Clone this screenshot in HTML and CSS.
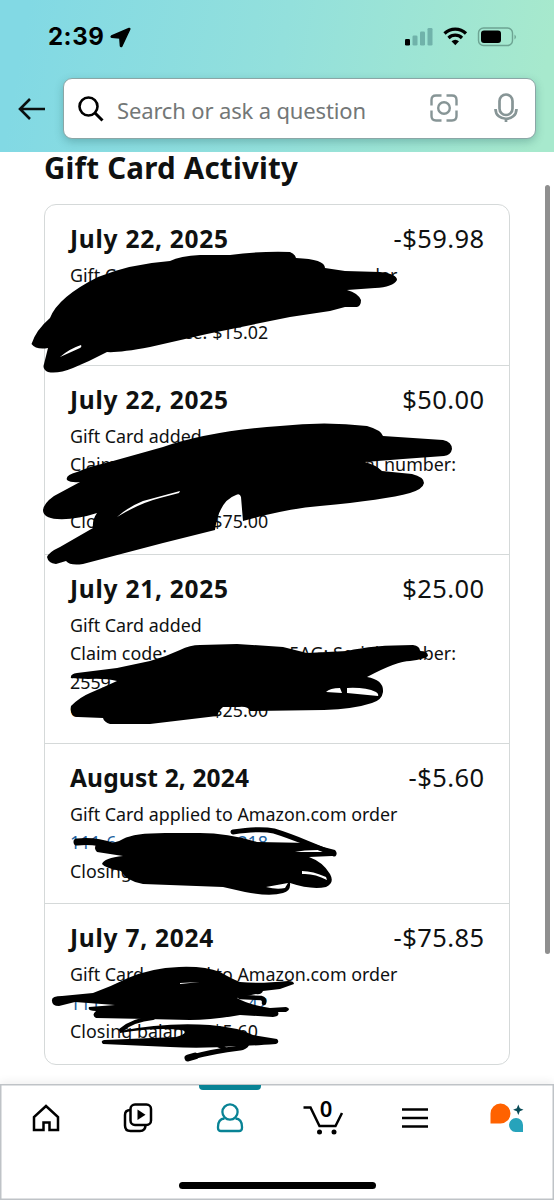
FILE: index.html
```html
<!DOCTYPE html>
<html lang="en">
<head>
<meta charset="utf-8">
<title>Gift Card Activity</title>
<link rel="stylesheet" href="styles.css">
</head>
<body>
<div class="screen">
  <header class="header">
    <div class="status">
      <span class="time">2:39</span>
      <svg class="location" width="21" height="21" viewBox="0 0 21 21" stroke="#000" stroke-width="1.400" stroke-linejoin="round"><path d="M19 1.500 1.500 9q-1 .8.3 1.300l8 .7.6 8q.6 1.200 1.400.2L19.800 2.200q.2-.9-.8-.7z"/></svg>
      <svg class="signals" width="114" height="22" viewBox="0 0 114 22">
        <rect x="1" y="13" width="5" height="6.500" rx="1.300"/>
        <g fill="#70b2aa"><rect x="8.500" y="9.500" width="5" height="10" rx="1.300"/><rect x="16" y="5.500" width="5" height="14" rx="1.300"/><rect x="23.500" y="2" width="5" height="17.500" rx="1.300"/></g>
        <g fill="none" stroke="#000" stroke-width="3.200"><path d="M40.500 7.500a15.500 15.500 0 0 1 21.500 0M44.500 12a9.500 9.500 0 0 1 13.500 0"/></g><path d="M47.500 15.300q3.700-3 7.500 0L51.300 19.200z"/>
        <rect x="74.500" y="2" width="34" height="17.500" rx="5" fill="none" stroke="#6da493" stroke-width="1.400"/><rect x="77" y="4.500" width="20" height="12.500" rx="3"/><path d="M110.500 8.500v5q3-2.500 0-5z" fill="#6da493"/>
      </svg>
    </div>
    <div class="search-row">
      <svg class="back" width="30" height="26" viewBox="0 0 30 26" fill="none" stroke="#0a1010" stroke-width="2.600"><path d="M28 13H3M13 3 3 13l10 10"/></svg>
      <div class="search">
        <svg class="glass" width="26" height="26" viewBox="0 0 26 26" fill="none" stroke="#000" stroke-width="2.600"><circle cx="10.500" cy="10.500" r="9"/><path d="m17 17 7.500 7.500" stroke-width="3"/></svg>
        <span class="placeholder">Search or ask a question</span>
        <svg class="lens" width="28" height="28" viewBox="0 0 28 28" fill="none" stroke="#879596" stroke-width="2.400"><path d="M1.500 11.500V6q0-4.500 4.500-4.500h5.500M16.500 1.500H22q4.500 0 4.500 4.500v5.500M26.500 16.500V22q0 4.500-4.500 4.500h-5.500M11.500 26.500H6q-4.500 0-4.500-4.500v-5.500"/><circle cx="14" cy="14" r="5.800"/></svg>
        <svg class="mic" width="24" height="30" viewBox="0 0 24 30" fill="none" stroke="#879596" stroke-width="2.700"><rect x="5.500" y="1.500" width="13" height="20.500" rx="6.500"/><path d="M1.500 16c0 13 21 13 21 0M12 25.500V29"/></svg>
      </div>
    </div>
  </header>

  <main class="content">
    <h1 class="title">Gift Card Activity</h1>
    <section class="card">
      <article class="entry">
        <div class="entry-head"><h2>July 22, 2025</h2><span class="amount">-$59.98</span></div>
        <p>Gift Card applied to Amazon.com order</p><p>&nbsp;</p><p class="balance">Closing balance: $15.02</p>
      </article>
      <article class="entry tall">
        <div class="entry-head"><h2>July 22, 2025</h2><span class="amount">$50.00</span></div>
        <p>Gift Card added</p><p class="split code-line"><span>Claim code:</span><span>Serial number:</span></p><p>&nbsp;</p><p class="balance">Closing balance: $75.00</p>
      </article>
      <article class="entry tall">
        <div class="entry-head"><h2>July 21, 2025</h2><span class="amount">$25.00</span></div>
        <p>Gift Card added</p><p class="split code-line"><span>Claim code:</span><span>5AG; Serial number:</span></p><p>2559</p><p class="balance">Closing balance: $25.00</p>
      </article>
      <article class="entry">
        <div class="entry-head"><h2 class="tight">August 2, 2024</h2><span class="amount">-$5.60</span></div>
        <p>Gift Card applied to Amazon.com order</p><p class="split order"><span>111-6</span><span>218</span></p><p>Closing</p>
      </article>
      <article class="entry">
        <div class="entry-head"><h2>July 7, 2024</h2><span class="amount">-$75.85</span></div>
        <p>Gift Card applied to Amazon.com order</p><p class="split order"><span>111</span><span>42</span></p><p class="balance">Closing balance: $5.60</p>
      </article>
    </section>
  </main>
  <div class="scrollbar"></div>

  <svg class="ink" width="554" height="1200" viewBox="0 0 554 1200">
    <g fill-rule="evenodd">
      <path d="M31.500 344Q36 330 50 318Q58 297 98 277Q130 264 170 261Q180 256 200 255L230 255Q260 251 290 252Q295 254 296 258Q325 259 325 268L345 271L380 272Q397 274 397 280Q393 287 375 288L347 290Q358 293 361 300Q361 306 357 307L345 307L330 311L290 317L207 334L150 347Q118 353 107 352Q90 361 73 368Q58 374 48 372Q42 369 44 364L48 348Q36 350 31.500 344Z M60 357Q69 349 81 345Q82 347 80 348Z"/>
      <path d="M67 480Q65 475 77 472L90 467L113 461L163 447Q210 431 280 426Q325 421 367 426Q381 430 383 436L443 440Q452 442 452 449Q451 455 444 456L403 459L365 462Q376 465 382 471L412 474Q424 477 424 483Q423 489 410 493Q385 500 320 506Q285 509 243 521L241 497Q240 493 236 495Q219 501 215 530L163 543L83 564Q70 566 66 561L56 564Q48 563 47 557Q49 552 60 547L93 528Q92 520 97 513Q76 520 57 519Q43 518 43 510Q44 503 54 496L80 482Q71 483 67 480Z M117 517Q128 507 143 501L180 491L179 493L160 498Q140 503 117 517Z"/>
      <path d="M71 678Q70 674 77 673L117 668L150 661Q165 657 180 650Q190 645 200 645L237 644L283 647L307 653L347 651Q373 645 413 645Q420 646 420 651Q428 651 428 656Q425 659 410 661Q397 661 367 677Q384 680 383 692Q382 700 372 703Q354 709 324 710L250 711Q248 706 239 707L223 707Q219 710 217 716L150 724L110 724Q104 722 103 718L78 717Q69 716 71 706Q80 697 90 693Q104 687 117 681Q105 678 88 679Z M326 692Q330 688 340 688L342 693Z M347 688Q365 687 376 692Q379 694 378 696L347 693Z"/>
      <path d="M97 844Q116 844 123 839Q134 833 165 833L200 833Q228 833 257 842L311 843Q322 847 335 850Q339 854 332 856L309 857Q323 862 330 874Q335 883 326 887Q311 890 290 883Q291 891 283 893Q270 897 245 892L223 887L143 884Q126 881 121 871Q105 868 102 864Q104 858 123 856L97 852Q93 848 97 844Z M266 887L288 883L285 888Q277 890 266 887Z M302 871Q313 871 326 877L327 880Q314 873 302 874Z M295 852Q303 850 318 850L327 852Z"/>
      <path d="M52 1001Q51 996 62 996L93 993Q112 986 128 978Q151 968 179 967Q205 966 220 972Q232 979 240 982Q259 984 288 981Q294 981 294 984L280 989L263 991Q261 995 256 994L237 998Q249 1005 270 1008L286 1007Q292 1009 286 1012L278 1012Q280 1016 273 1017L240 1015Q211 1020 190 1020L147 1019L96 1018Q91 1015 96 1011Q87 1011 89 1007L115 1005L75 1002L59 1006Q52 1006 52 1001Z M180 983L200 982L180 984Z"/>
      <path d="M120 1031Q165 1022 210 1025Q237 1027 253 1035L277 1039Q280 1042 276 1044Q248 1046 238 1046Q202 1049 170 1047L103 1044Q100 1041 104 1040L176 1037Q190 1033 182 1030Q155 1027 120 1033Z"/>
    </g>
    <g fill="none" stroke="#000" stroke-linecap="round" stroke-linejoin="round">
      <path d="M77 842Q95 840 112 846" stroke-width="7"/><path d="M233 832Q260 828 274 831Q287 835 307 843L334 854" stroke-width="5"/>
      <path d="M240 997L261 998Q265 999 264 1003" stroke-width="4.500"/><path d="M121 1030Q133 1020 153 1018" stroke-width="4"/>
      <path d="M246 1041Q249 1046 240 1048Q214 1051 188 1058" stroke-width="5"/><path d="M206 1042Q219 1044 226 1050" stroke-width="4"/>
      <path d="M188 1058L195 1056" stroke-width="7"/>
    </g>
  </svg>

  <nav class="tabs">
    <a class="tab"><svg width="34" height="34" viewBox="0 0 34 34" fill="none" stroke="#000" stroke-width="2.500"><path d="M5 29V16L17 5 29 16v13h-8.500v-7.500h-6V29z"/></svg></a>
    <a class="tab"><svg width="34" height="34" viewBox="0 0 34 34" fill="none" stroke="#000" stroke-width="2.500"><rect x="9.500" y="3.500" width="20.500" height="20.500" rx="4.500"/><path d="M9.500 9q-5.500 0-5.500 5v10.500q0 5.500 5.500 5.500h9.500q5.500 0 5.500-6"/><path d="m16.500 8.500 8 5.200-8 5.300z" fill="#000" stroke="none"/></svg></a>
    <a class="tab active"><svg width="34" height="34" viewBox="0 0 34 34" fill="none" stroke="#088395" stroke-width="2.300"><circle cx="17" cy="11" r="7.600"/><path d="M11.500 17.500Q5 18 5 26v1q0 3 3 3h18q3 0 3-3v-1q0-8-6.500-8.500"/></svg></a>
    <a class="tab"><svg width="42" height="36" viewBox="0 0 42 36" fill="none" stroke="#000" stroke-width="2.500"><path d="M1.500 7.500h7L17.500 26h16L40 13"/><g fill="#000" stroke="none"><circle cx="17.500" cy="32" r="2.500"/><circle cx="32" cy="32" r="2.500"/></g></svg><span class="count">0</span></a>
    <a class="tab"><svg width="34" height="34" viewBox="0 0 34 34" stroke="#000" stroke-width="2.500"><path d="M4 8.500h26M4 17h26M4 25.500h26"/></svg></a>
    <a class="tab"><svg width="34" height="34" viewBox="0 0 34 34"><path d="M.500 22.500v-10a10 10 0 1 1 10 10z" fill="#ff6200"/><path d="M33 31h-7.500a7 7 0 1 1 7.500-7z" fill="#27a3bb"/><path d="m28.300 3.500 1.500 3.700 3.700 1.500-3.700 1.500-1.500 3.700-1.500-3.700-3.700-1.500 3.700-1.500z" fill="#084b57"/></svg></a>
    <div class="home-bar"></div>
  </nav>
</div>
</body>
</html>
```
FILE: styles.css
```css
* { box-sizing: border-box; }
body { margin: 0; font-family: "Noto Sans", "Open Sans", sans-serif; color: #0f1111; background: #fff; }
.screen { position: relative; width: 554px; height: 1200px; overflow: hidden; display: flex; flex-direction: column; }
.header { height: 152px; flex: none; background: linear-gradient(100deg, #82d9e4 5%, #93e0dc 50%, #a7e9cd 96%); }
.status { height: 78px; padding: 0 36px 4px 48px; display: flex; align-items: center; }
.time { font: 700 24px/30px Inter, sans-serif; color: #000; width: 57px; letter-spacing: .5px; }
.location { margin-left: 5px; }
.signals { margin-left: auto; }
.search-row { display: flex; align-items: center; padding-left: 17px; }
.search { margin-left: 16px; width: 473px; height: 61px; background: #fff; border: 1px solid #8ba6a6; border-radius: 9px; display: flex; align-items: center; padding: 0 17px 0 14px; box-shadow: 0 3px 8px rgba(30, 90, 90, .3); }
.glass { flex: none; }
.placeholder { margin: 3px auto 0 13px; color: #737777; font-size: 22px; white-space: nowrap; letter-spacing: -.15px; }
.mic { margin-left: 36px; margin-bottom: 2px; flex: none; }
.lens { flex: none; margin-bottom: 2px; }
.content { padding: 0 44px; }
.title { margin: -4px 0 0; height: 56px; font-size: 29.500px; line-height: 40px; font-weight: 700; letter-spacing: .22px; white-space: nowrap; }
.card { border: 1px solid #d5d9d9; border-radius: 12px; height: 861px; }
.entry { height: 160.700px; padding: 18px 25px 0; border-bottom: 1px solid #d5d9d9; }
.entry.tall { height: 189px; }
.entry:last-child { border-bottom: 0; }
.entry-head { height: 38px; display: flex; justify-content: space-between; line-height: 32px; }
.entry h2 { margin: 0; font-size: 24.500px; font-weight: 700; letter-spacing: .75px; }
.entry h2.tight { letter-spacing: .15px; }
.amount { font-size: 25.500px; letter-spacing: .4px; margin-right: -.4px; line-height: 31px; }
.entry p { margin: 0; font-size: 17.850px; line-height: 28.500px; white-space: nowrap; }
.split { display: flex; justify-content: space-between; }
.code-line { width: 386px; }
.order { width: 198px; color: #2162a1; }
.balance { letter-spacing: .06px; }
.scrollbar { position: absolute; left: 545px; top: 185px; width: 5px; height: 769px; border-radius: 3px; background: #8f8f8f; }
.ink { position: absolute; left: 0; top: 0; pointer-events: none; }
.tabs { position: absolute; left: 0; bottom: 0; width: 554px; height: 116px; background: #fff; display: grid; grid-template-columns: repeat(6, 1fr); box-shadow: inset 0 0 0 1.500px #bfc3c7, 0 -3px 8px rgba(0, 0, 0, .06); }
.tab { position: relative; height: 67px; display: flex; align-items: center; justify-content: center; }
.tab:first-child, .tab:nth-child(n+3) { padding-right: 1px; }
.tab:nth-child(2) { padding-right: 1px; }
.active::before { content: ""; position: absolute; top: 1px; width: 62px; height: 5px; border-radius: 0 0 4px 4px; background: #088395; }
.count { position: absolute; top: 9px; left: 0; right: -6px; text-align: center; font-size: 22px; font-weight: 600; line-height: 30px; color: #000; }
.home-bar { position: absolute; left: 179px; bottom: 11px; width: 197px; height: 7px; border-radius: 4px; background: #000; }
```
